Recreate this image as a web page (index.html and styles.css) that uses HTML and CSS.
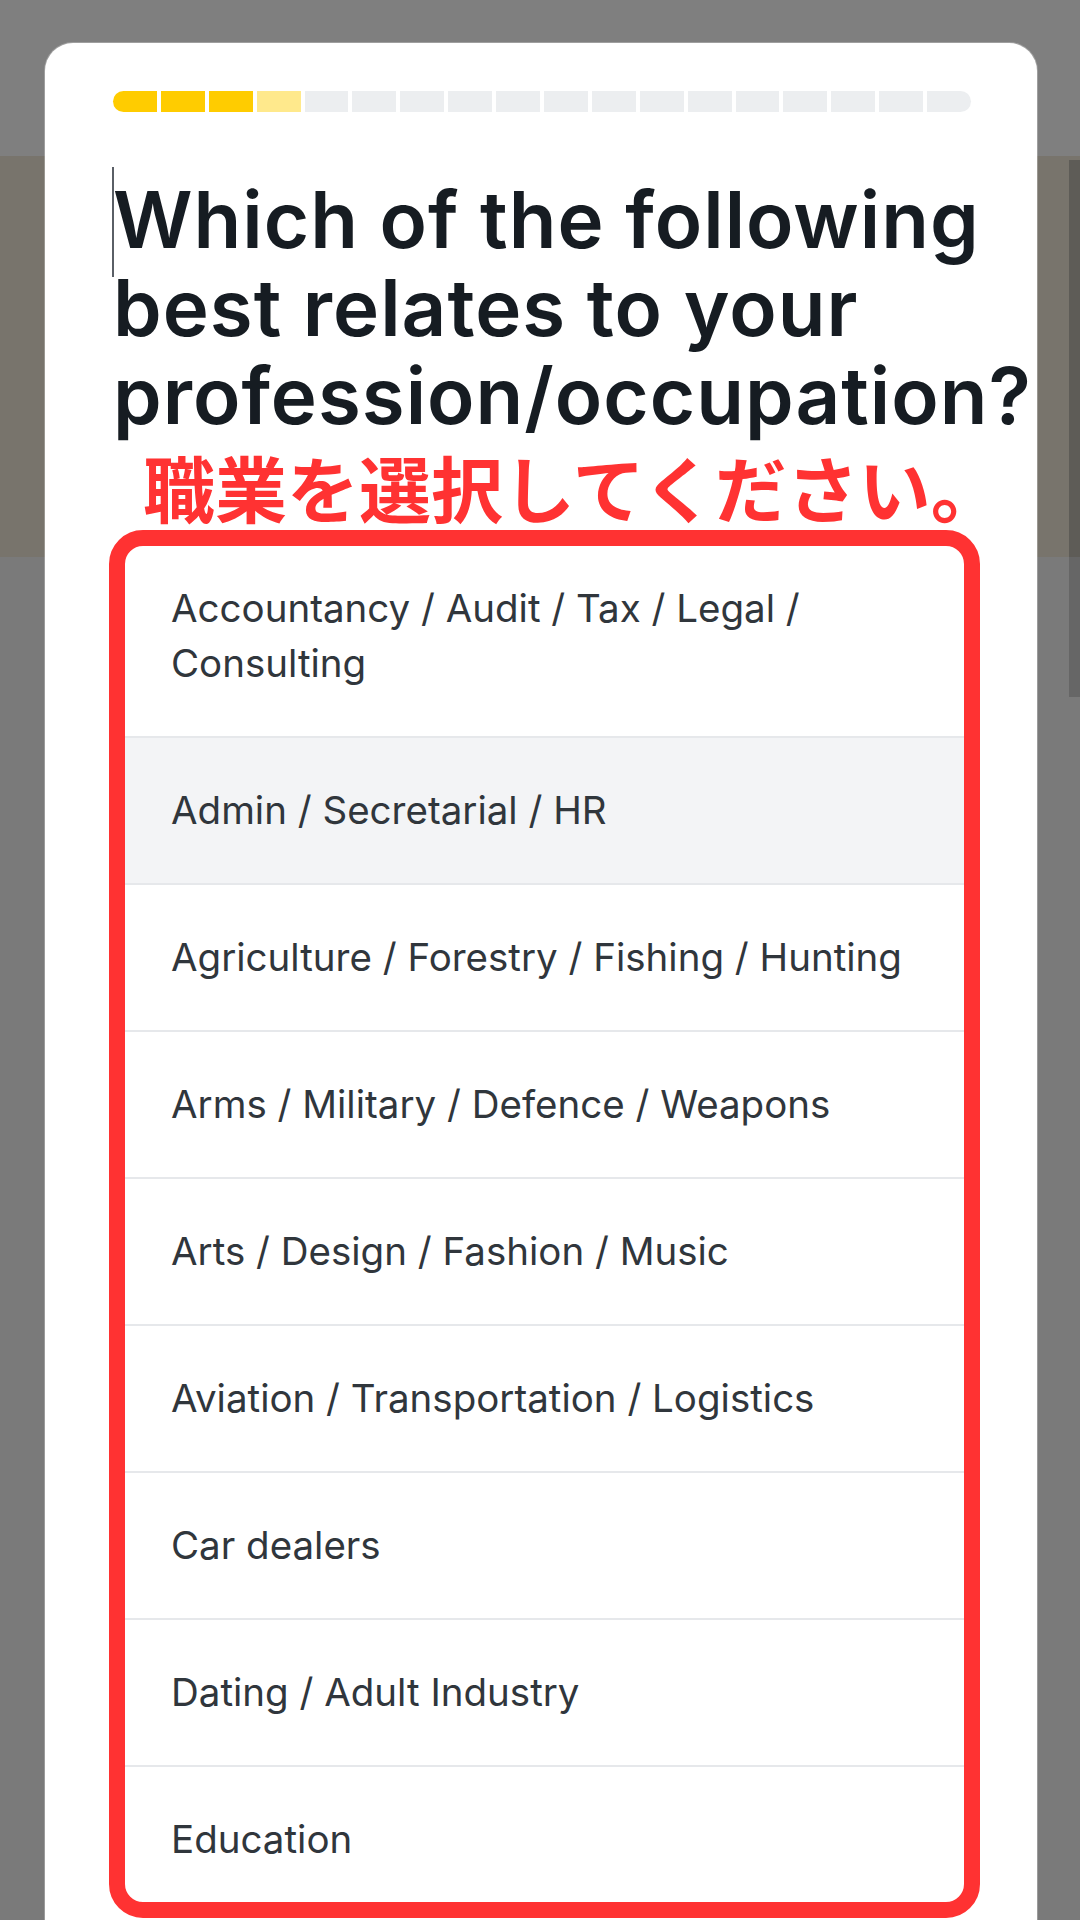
FILE: index.html
```html
<!DOCTYPE html>
<html lang="en">

<head>
    <meta charset="UTF-8">
    <meta name="viewport" content="width=device-width, initial-scale=1.0">
    <title>Profession</title>
    <link rel="stylesheet" href="styles.css">
</head>

<body>
    <div class="page">
        <div class="page-header"></div>
        <div class="page-hero"></div>
        <div class="page-body"></div>
        <div class="page-scroll"></div>
    </div>

    <div class="modal">
        <div class="progress">
            <span class="step done"></span>
            <span class="step done"></span>
            <span class="step done"></span>
            <span class="step current"></span>
            <span class="step"></span>
            <span class="step"></span>
            <span class="step"></span>
            <span class="step"></span>
            <span class="step"></span>
            <span class="step"></span>
            <span class="step"></span>
            <span class="step"></span>
            <span class="step"></span>
            <span class="step"></span>
            <span class="step"></span>
            <span class="step"></span>
            <span class="step"></span>
            <span class="step"></span>
        </div>

        <h1 class="question">Which of the following<br>best relates to your<br>profession/occupation?</h1>
        <p class="note">職業を選択してください。</p>

        <div class="options">
            <ul class="option-list">
                <li>Accountancy / Audit / Tax / Legal / Consulting</li>
                <li class="hover">Admin / Secretarial / HR</li>
                <li>Agriculture / Forestry / Fishing / Hunting</li>
                <li>Arms / Military / Defence / Weapons</li>
                <li>Arts / Design / Fashion / Music</li>
                <li>Aviation / Transportation / Logistics</li>
                <li>Car dealers</li>
                <li>Dating / Adult Industry</li>
                <li>Education</li>
            </ul>
        </div>
    </div>
</body>

</html>
```

FILE: styles.css
```css
html,
body {
    margin: 0;
    height: 1920px;
    overflow: hidden;
}

body {
    background-color: #7a7a7a;
    font-family: Inter, "Noto Sans", sans-serif;
}

/* page behind the overlay */
.page {
    position: relative;
    display: flex;
    flex-direction: column;
    height: 1920px;
}

.page-header {
    height: 156px;
    background-color: #7f7f7f;
}

.page-hero {
    height: 401px;
    background-color: #78746c;
}

.page-body {
    flex: 1;
    background-color: #7a7a7a;
}

.page-scroll {
    position: absolute;
    top: 160px;
    right: 0;
    width: 11px;
    height: 537px;
    background: linear-gradient(#5e5c57 0, #5e5c57 397px, #666666 397px);
}

/* modal */
.modal {
    position: absolute;
    top: 43px;
    left: 45px;
    width: 992px;
    height: 1877px;
    box-sizing: border-box;
    padding: 48px 66px 0 68px;
    background-color: #ffffff;
    border-radius: 28px 28px 0 0;
    box-shadow: 0 0 0 1px rgba(255, 255, 255, 0.25);
}

.progress {
    display: flex;
    gap: 4px;
    height: 21px;
}

.step {
    flex: 1;
    background-color: #eceef0;
}

.step:first-child {
    border-radius: 11px 0 0 11px;
}

.step:last-child {
    border-radius: 0 11px 11px 0;
}

.step.done {
    background-color: #ffcc00;
}

.step.current {
    background-color: #ffe98c;
}

.question {
    position: relative;
    margin: 64px 0 0;
    font-size: 78px;
    font-weight: 600;
    line-height: 88px;
    color: #161c22;
    white-space: nowrap;
    letter-spacing: 1px;
}

/* text caret */
.question::before {
    content: "";
    position: absolute;
    left: -1px;
    top: -9px;
    width: 2px;
    height: 110px;
    background-color: #5a5f66;
}

.note {
    margin: 10px 0 0 30px;
    font-family: "Noto Sans CJK JP", sans-serif;
    font-size: 72px;
    font-weight: 700;
    line-height: 72px;
    color: #ff3232;
    white-space: nowrap;
}

.options {
    position: relative;
    margin-top: 12px;
}

/* red annotation frame */
.options::after {
    content: "";
    position: absolute;
    top: -4px;
    left: -4px;
    width: 871px;
    height: 1388px;
    box-sizing: border-box;
    border: 16px solid #ff3232;
    border-radius: 34px;
}

.option-list {
    list-style: none;
    margin: 0;
    padding: 0;
    border: 2px solid #e6e8eb;
    border-radius: 24px;
    overflow: hidden;
}

.option-list li {
    padding: 45px 30px 45px 56px;
    font-size: 38.5px;
    line-height: 55px;
    color: #30363c;
    border-top: 2px solid #e6e8eb;
}

.option-list li:first-child {
    border-top: none;
}

.option-list li.hover {
    background-color: #f3f4f6;
}
```
